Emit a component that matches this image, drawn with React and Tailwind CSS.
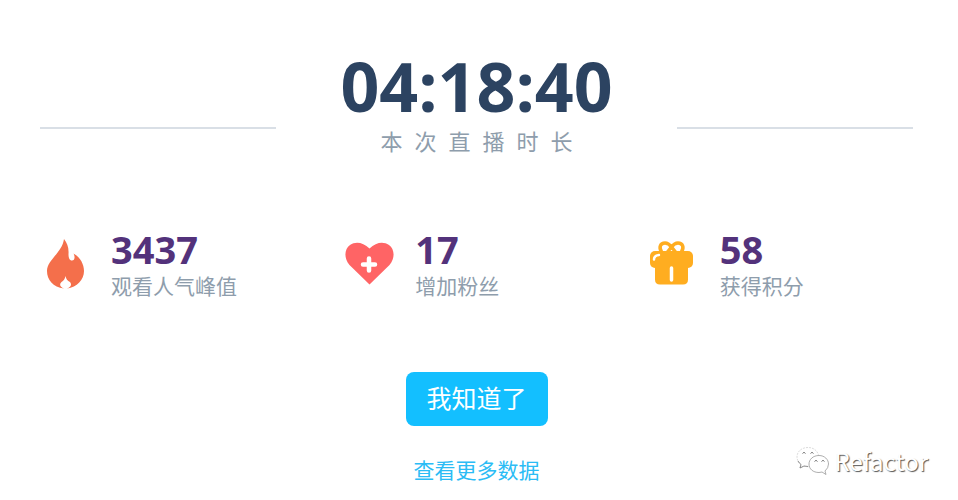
const sans = "font-['Open_Sans','Noto_Sans_CJK_SC',sans-serif]";

function FlameIcon() {
  return (
    <svg aria-hidden="true" viewBox="0 0 50 52" className="h-[52px] w-[50px]">
      <path
        fill="#f46f4b"
        d="M24 0C27 4 29 8 28.500 15C28.500 19 29.500 21.500 32 21.500C34.500 21.500 35.500 18 33.500 14.500C40 18 44 25 44 32C44 41 37 48 27 49.500C31 48 32 45.500 30 43C27.500 42 26 40 25.500 37C25 40 23.500 42 21.500 43C19 45.500 20 48 24 49.500C13 48 7 41 7 32C7 21 22 14 24 0Z"
      />
    </svg>
  );
}

function HeartIcon() {
  return (
    <svg aria-hidden="true" viewBox="0 0 50 52" className="h-[52px] w-[50px]">
      <path
        fill="#ff6465"
        d="M25.500 45.500L5.500 26C-.5 19 .5 10 6 6C12 2 19 3.500 25.500 9.500C32 3.500 39 2 45 6C50.500 10 51.500 19 45.500 26Z"
      />
      <path stroke="#fff" strokeWidth="4.500" strokeLinecap="round" d="M25 19.500V31.500M19 25.500H31" />
    </svg>
  );
}

function GiftIcon() {
  return (
    <svg aria-hidden="true" viewBox="0 0 50 52" className="h-[52px] w-[50px]">
      <g fill="none" stroke="#ffad20" strokeWidth="3.500">
        <path d="M12.500 13C9.500 8 11.500 4 16 4C19 4 21 6 22.500 8C24 6 26 4 29 4C33.500 4 35.500 8 32.500 13" />
        <path d="M18.500 13L22.500 8L26.500 13" />
      </g>
      <rect x="1" y="12" width="43" height="17" rx="5" fill="#ffad20" />
      <path fill="#ffad20" d="M6 24H39V40.500Q39 45.500 34 45.500H11Q6 45.500 6 40.500Z" />
      <path fill="none" stroke="#fff" strokeWidth="2.500" strokeLinecap="round" d="M5 20.500Q5 16.500 10 16" />
      <path stroke="#fff" strokeWidth="3.500" strokeLinecap="round" d="M22.500 29V41" />
    </svg>
  );
}

function WechatIcon() {
  return (
    <svg aria-hidden="true" viewBox="0 0 34 30" className="h-[30px] w-[34px]" fill="#fff">
      <path stroke="#ccc" strokeWidth="0.700" strokeDasharray="2 1" d="M12 1.500C5.500 1.500 1 5.500 1 11C1 14 2.500 16.500 5 18.500L4 22L8 20Q10 21 14 20.500C23 19 23 12 22.500 9C21 4 17 1.500 12 1.500Z" />
      <path fill="none" stroke="#777" strokeWidth="0.800" d="M2 15Q3 17 5 18.500L4 22L8 20L12 20.500" />
      <path stroke="#999" strokeWidth="0.800" d="M23 9.500C17 9.500 13 13.500 13 18C13 23 17 26.500 23 26.500L26 26L30 28.500L29 25Q32.500 22 32.500 18C32.500 13.500 28.500 9.500 23 9.500Z" />
      <path
        fill="none"
        stroke="#777"
        strokeWidth="1"
        d="M6.500 7.500Q8 5 9.500 7.500M14.500 7.500Q16 5 17.500 7.500M18.500 15.500Q20 13 21.500 15.500M25.500 15.500Q27 13 28.500 15.500"
      />
    </svg>
  );
}

const stats = [
  { value: "3437", label: "观看人气峰值", Icon: FlameIcon },
  { value: "17", label: "增加粉丝", Icon: HeartIcon },
  { value: "58", label: "获得积分", Icon: GiftIcon },
];

export default function App() {
  return (
    <main className={`relative min-h-screen bg-white pr-[45px] pl-10 ${sans}`}>
      <header className="flex items-end gap-16 pt-[50px]">
        <div className="mb-7 h-0.5 flex-1 bg-[#d9dfe6]" />
        <div className="flex flex-col items-center gap-1">
          <h1 className="text-[68px] leading-[72px] font-bold text-[#2c4361]">04:18:40</h1>
          <p className="flex gap-3 text-[22px] leading-[31px] font-normal text-[#8e9dac]">
            {[..."本次直播时长"].map((char) => (
              <span key={char}>{char}</span>
            ))}
          </p>
        </div>
        <div className="mb-7 h-0.5 flex-1 bg-[#d9dfe6]" />
      </header>

      <section className="mt-[71px] grid grid-cols-3 gap-10">
        {stats.map(({ value, label, Icon }) => (
          <div key={label} className="flex items-center gap-[21px]">
            <Icon />
            <div>
              <p className="text-[38px] leading-[42px] font-bold text-[#53327b]">{value}</p>
              <p className="text-[21px] leading-8 font-normal whitespace-nowrap text-[#8e9dac]">{label}</p>
            </div>
          </div>
        ))}
      </section>

      <div className="mt-[70px] flex flex-col items-center gap-7">
        <button type="button" className="h-[54px] w-[142px] rounded-lg bg-[#13bfff] text-[25px] font-normal text-white">
          我知道了
        </button>
        <a href="#data" className="text-[21px] leading-8 font-normal text-[#2bbcf5]">
          查看更多数据
        </a>
      </div>

      <div className="absolute right-[30px] bottom-[23px] flex items-center gap-1">
        <WechatIcon />
        <span className="font-['Noto_Sans_CJK_SC',sans-serif] text-[24px] leading-8 text-white [text-shadow:1px_1px_1px_#555]">Refactor</span>
      </div>
    </main>
  );
}
